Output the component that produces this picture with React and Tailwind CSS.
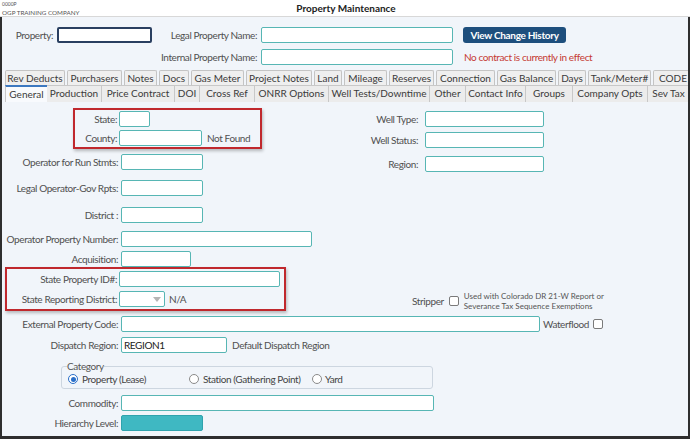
import React from "react";

function Input({ className = "", children }) {
  return (
    <div className={`h-[16px] shrink-0 border border-[#57b6b4] bg-white rounded-[2px] text-[10px] leading-[14px] px-[2px] text-[#222] ${className}`}>
      {children}
    </div>
  );
}

function Row({ label, lw = "w-[116px]", gap = "ml-[3px]", className = "", children }) {
  return (
    <div className={`flex items-center h-[16px] ${className}`}>
      <div className={`${lw} shrink-0 text-right text-[10px] text-[#505050] leading-[16px] whitespace-nowrap`}>{label}</div>
      <div className={`${gap} flex items-center`}>{children}</div>
    </div>
  );
}

function Check() {
  return <span className="inline-block w-[10px] h-[10px] border border-[#7a7a7a] rounded-[2px] bg-white shrink-0 align-middle" />;
}

function Radio({ on }) {
  return on ? (
    <span className="w-[10px] h-[10px] rounded-full border border-[#2a6fc9] bg-white flex items-center justify-center shrink-0">
      <span className="w-[5px] h-[5px] rounded-full bg-[#2a6fc9]" />
    </span>
  ) : (
    <span className="w-[10px] h-[10px] rounded-full border border-[#8a8a8a] bg-white shrink-0" />
  );
}

const tabs1 = [
  ["Rev Deducts", "w-[60px]"],
  ["Purchasers", "w-[55px]"],
  ["Notes", "w-[33px]"],
  ["Docs", "w-[30px]"],
  ["Gas Meter", "w-[53px]"],
  ["Project Notes", "w-[66px]"],
  ["Land", "w-[28px]"],
  ["Mileage", "w-[43px]"],
  ["Reserves", "w-[45px]"],
  ["Connection", "w-[59px]"],
  ["Gas Balance", "w-[59px]"],
  ["Days", "w-[28px]"],
  ["Tank/Meter#", "w-[63px]"],
  ["CODE", "w-[40px]"],
];

const tabs2 = [
  ["General", "w-[42px]"],
  ["Production", "w-[55px]"],
  ["Price Contract", "w-[73px]"],
  ["DOI", "w-[25px]"],
  ["Cross Ref", "w-[55px]"],
  ["ONRR Options", "w-[74px]"],
  ["Well Tests/Downtime", "w-[101px]"],
  ["Other", "w-[36px]"],
  ["Contact Info", "w-[60px]"],
  ["Groups", "w-[47px]"],
  ["Company Opts", "w-[75px]"],
  ["Sev Tax", "w-[42px]"],
];

export default function App() {
  return (
    <div className="w-[690px] h-[439px] overflow-hidden bg-white font-['Lato',sans-serif] text-[#505050] tracking-[-0.4px]">
      {/* header */}
      <div className="h-[17px] flex items-start border-b border-[#d8d8d8] bg-white tracking-normal">
        <div className="flex-1 pl-[2px] text-[#555]">
          <div className="text-[5px] leading-[6px] pt-[1px]">0000P</div>
          <div className="text-[6.3px] leading-[7px] mt-[2px]">OGP TRAINING COMPANY</div>
        </div>
        <div className="text-[10px] font-bold text-[#222] leading-[17px]">Property Maintenance</div>
        <div className="flex-1" />
      </div>

      {/* body */}
      <div className="h-[422px] bg-[#f1f5fa] border-l-2 border-r-2 border-b-[3px] border-[#2e2e2e] overflow-hidden">
        {/* top fields */}
        <div className="pt-[10px]">
          <div className="flex items-center h-[16px]">
            <div className="w-[51px] text-right text-[10px] leading-[16px]">Property:</div>
            <div className="ml-[4px] w-[95px] h-[16px] border-2 border-[#2a3f60] bg-white rounded-[2px]" />
            <div className="w-[105px] text-right text-[10px] leading-[16px] whitespace-nowrap">Legal Property Name:</div>
            <Input className="ml-[4px] w-[192px]" />
            <div className="ml-[10px] w-[103px] h-[16px] rounded-[3px] bg-[#1e4f7d] text-white font-bold text-[10px] leading-[16px] text-center whitespace-nowrap tracking-[-0.3px]">
              View Change History
            </div>
          </div>
          <div className="flex items-center h-[16px] mt-[6px]">
            <div className="w-[150px]" />
            <div className="w-[105px] text-right text-[10px] leading-[16px] whitespace-nowrap">Internal Property Name:</div>
            <Input className="ml-[4px] w-[192px]" />
            <div className="ml-[11px] text-[10px] leading-[16px] text-[#c53a32] whitespace-nowrap">No contract is currently in effect</div>
          </div>
        </div>

        {/* tabs */}
        <div className="mt-[5px] flex gap-[2px] pl-[3px] overflow-hidden tracking-normal">
          {tabs1.map(([t, w]) => (
            <div
              key={t}
              className={`${w} shrink-0 h-[15px] border border-b-0 border-[#c4c4c4] rounded-t-[2px] bg-[#efefef] text-[10px] leading-[14px] text-center text-[#3a3a3a] whitespace-nowrap`}
            >
              {t}
            </div>
          ))}
        </div>
        <div className="flex pl-[3px] overflow-hidden tracking-normal">
          {tabs2.map(([t, w], i) => (
            <div
              key={t}
              className={`${w} shrink-0 h-[17px] text-[10px] leading-[15px] text-center text-[#3a3a3a] whitespace-nowrap ${
                i === 0
                  ? "bg-[#f8fafd] border-t-2 border-t-[#3c78c0] border-l border-l-[#c8c8c8]"
                  : "bg-[#ececec] border-t border-r border-[#c8c8c8]"
              }`}
            >
              {t}
            </div>
          ))}
        </div>

        {/* form */}
        <div className="flex">
          <div className="w-[343px] shrink-0">
            <div className="mt-[6px] ml-[71px] w-[189px] border-2 border-[#c0282d] pt-[1px] pb-[1px] shadow-[1px_2px_3px_rgba(0,0,0,0.25)] flex flex-col gap-[3px]">
              <Row label="State:" lw="w-[42px]" gap="ml-[2px]">
                <Input className="w-[31px]" />
              </Row>
              <Row label="County:" lw="w-[42px]" gap="ml-[2px]">
                <Input className="w-[83px]" />
                <span className="ml-[5px] text-[10px] whitespace-nowrap">Not Found</span>
              </Row>
            </div>
            <Row label="Operator for Run Stmts:" className="mt-[5px]">
              <Input className="w-[82px]" />
            </Row>
            <Row label="Legal Operator-Gov Rpts:" className="mt-[10px]">
              <Input className="w-[82px]" />
            </Row>
            <Row label="District :" className="mt-[11px]">
              <Input className="w-[82px]" />
            </Row>
            <Row label="Operator Property Number:" className="mt-[8px]">
              <Input className="w-[191px]" />
            </Row>
            <Row label="Acquisition:" className="mt-[4px]">
              <Input className="w-[70px]" />
            </Row>
            <div className="ml-[3px] w-[281px] border-2 border-[#c0282d] pt-[2px] pb-[2px] shadow-[1px_2px_3px_rgba(0,0,0,0.25)] flex flex-col gap-[4px]">
              <Row label="State Property ID#:" lw="w-[110px]" gap="ml-[2px]">
                <Input className="w-[161px]" />
              </Row>
              <Row label="State Reporting District:" lw="w-[110px]" gap="ml-[2px]">
                <Input className="w-[46px] relative">
                  <svg className="absolute right-[3px] top-[5px]" width="8" height="5" viewBox="0 0 8 5">
                    <path d="M0 0 L8 0 L4 5 Z" fill="#b5b5b5" />
                  </svg>
                </Input>
                <span className="ml-[4px] text-[10px]">N/A</span>
              </Row>
            </div>
          </div>

          <div className="flex-1 flex flex-col pt-[9px]">
            <Row label="Well Type:" lw="w-[73px]" gap="ml-[7px]">
              <Input className="w-[119px]" />
            </Row>
            <Row label="Well Status:" lw="w-[73px]" gap="ml-[7px]" className="mt-[5px]">
              <Input className="w-[119px]" />
            </Row>
            <Row label="Region:" lw="w-[73px]" gap="ml-[7px]" className="mt-[8px]">
              <Input className="w-[119px]" />
            </Row>
            <div className="mt-auto mb-0 pl-[67px] flex items-center">
              <span className="text-[10px] leading-[14px]">Stripper</span>
              <span className="ml-[5px] flex"><Check /></span>
              <div className="ml-[5px] text-[8px] leading-[10px] text-[#555] whitespace-nowrap tracking-normal">
                <div>Used with Colorado DR 21-W Report or</div>
                <div>Severance Tax Sequence Exemptions</div>
              </div>
            </div>
          </div>
        </div>

        <Row label="External Property Code:" className="mt-[5px]">
          <Input className="w-[419px]" />
          <span className="ml-[3px] text-[10px] whitespace-nowrap">Waterflood</span>
          <span className="ml-[4px] flex"><Check /></span>
        </Row>
        <Row label="Dispatch Region:" className="mt-[5px]">
          <Input className="w-[106px]">REGION1</Input>
          <span className="ml-[5px] text-[10px] whitespace-nowrap">Default Dispatch Region</span>
        </Row>

        <fieldset className="mt-[7px] ml-[59px] w-[372px] border border-[#cdd6e0] rounded-[3px] pb-[2px]">
          <legend className="ml-[5px] text-[10px] leading-[12px] text-[#555]">Category</legend>
          <div className="flex items-center h-[14px] pl-[6px] text-[10px] text-[#444]">
            <div className="w-[121px] flex items-center gap-[4px]">
              <Radio on />
              <span>Property (Lease)</span>
            </div>
            <div className="w-[123px] flex items-center gap-[4px]">
              <Radio />
              <span>Station (Gathering Point)</span>
            </div>
            <div className="flex items-center gap-[3px]">
              <Radio />
              <span>Yard</span>
            </div>
          </div>
        </fieldset>

        <Row label="Commodity:" className="mt-[6px]">
          <Input className="w-[313px]" />
        </Row>
        <Row label="Hierarchy Level:" className="mt-[4px]">
          <div className="w-[82px] h-[16px] border border-[#2fa3ad] bg-[#3fb8c2] rounded-[2px]" />
        </Row>
      </div>
    </div>
  );
}
